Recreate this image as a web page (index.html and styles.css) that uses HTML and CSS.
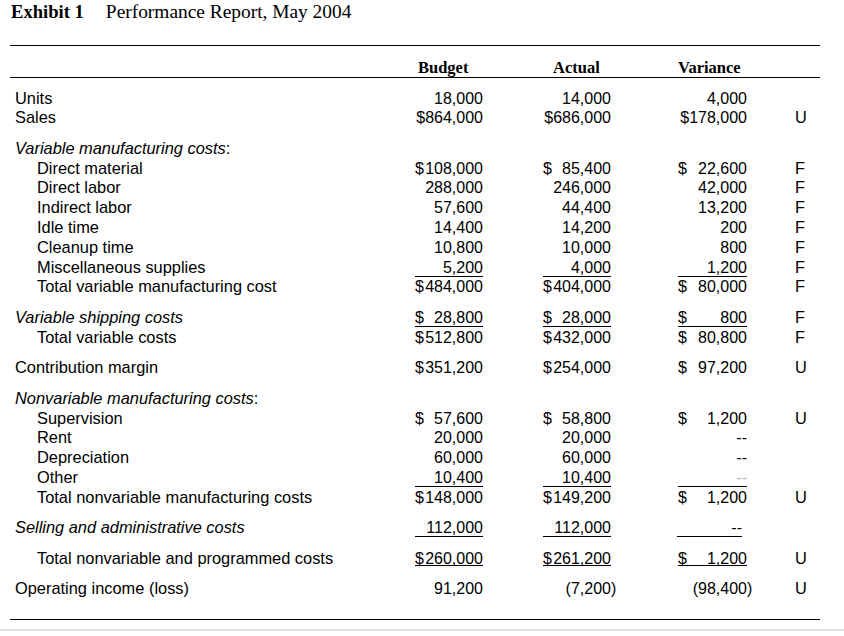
FILE: index.html
```html
<!DOCTYPE html>
<html>
<head>
<meta charset="utf-8">
<link rel="stylesheet" href="styles.css">
</head>
<body>
<h1 class="title"><b class="ex">Exhibit 1</b><span>Performance Report, May 2004</span></h1>
<div class="report">
  <div class="row head">
    <div></div>
    <div class="h hb">Budget</div>
    <div class="h ha">Actual</div>
    <div class="h hv">Variance</div>
    <div></div>
  </div>
  <div class="rows">
    <div class="row"><div class="l">Units</div><div class="n b"><span>18,000</span></div><div class="n a"><span>14,000</span></div><div class="n v"><span>4,000</span></div><div class="fu"></div></div>
    <div class="row"><div class="l">Sales</div><div class="n b"><span>$864,000</span></div><div class="n a"><span>$686,000</span></div><div class="n v"><span>$178,000</span></div><div class="fu">U</div></div>

    <div class="row gap"><div class="l"><i>Variable manufacturing costs</i>:</div></div>
    <div class="row"><div class="l s">Direct material</div><div class="n b"><span>$</span><span>108,000</span></div><div class="n a"><span>$</span><span>85,400</span></div><div class="n v"><span>$</span><span>22,600</span></div><div class="fu">F</div></div>
    <div class="row"><div class="l s">Direct labor</div><div class="n b"><span>288,000</span></div><div class="n a"><span>246,000</span></div><div class="n v"><span>42,000</span></div><div class="fu">F</div></div>
    <div class="row"><div class="l s">Indirect labor</div><div class="n b"><span>57,600</span></div><div class="n a"><span>44,400</span></div><div class="n v"><span>13,200</span></div><div class="fu">F</div></div>
    <div class="row"><div class="l s">Idle time</div><div class="n b"><span>14,400</span></div><div class="n a"><span>14,200</span></div><div class="n v"><span>200</span></div><div class="fu">F</div></div>
    <div class="row"><div class="l s">Cleanup time</div><div class="n b"><span>10,800</span></div><div class="n a"><span>10,000</span></div><div class="n v"><span>800</span></div><div class="fu">F</div></div>
    <div class="row"><div class="l s">Miscellaneous supplies</div><div class="n b u3"><span>5,200</span></div><div class="n a u3"><span>4,000</span></div><div class="n v u3"><span>1,200</span></div><div class="fu">F</div></div>
    <div class="row"><div class="l s">Total variable manufacturing cost</div><div class="n b"><span>$</span><span>484,000</span></div><div class="n a"><span>$</span><span>404,000</span></div><div class="n v"><span>$</span><span>80,000</span></div><div class="fu">F</div></div>

    <div class="row gap"><div class="l"><i>Variable shipping costs</i></div><div class="n b u3"><span>$</span><span>28,800</span></div><div class="n a u3"><span>$</span><span>28,000</span></div><div class="n v u3"><span>$</span><span>800</span></div><div class="fu">F</div></div>
    <div class="row"><div class="l s">Total variable costs</div><div class="n b"><span>$</span><span>512,800</span></div><div class="n a"><span>$</span><span>432,000</span></div><div class="n v"><span>$</span><span>80,800</span></div><div class="fu">F</div></div>

    <div class="row gap"><div class="l">Contribution margin</div><div class="n b"><span>$</span><span>351,200</span></div><div class="n a"><span>$</span><span>254,000</span></div><div class="n v"><span>$</span><span>97,200</span></div><div class="fu">U</div></div>

    <div class="row gap"><div class="l"><i>Nonvariable manufacturing costs</i>:</div></div>
    <div class="row"><div class="l s">Supervision</div><div class="n b"><span>$</span><span>57,600</span></div><div class="n a"><span>$</span><span>58,800</span></div><div class="n v"><span>$</span><span>1,200</span></div><div class="fu">U</div></div>
    <div class="row"><div class="l s">Rent</div><div class="n b"><span>20,000</span></div><div class="n a"><span>20,000</span></div><div class="n v"><span>--</span></div><div class="fu"></div></div>
    <div class="row"><div class="l s">Depreciation</div><div class="n b"><span>60,000</span></div><div class="n a"><span>60,000</span></div><div class="n v"><span>--</span></div><div class="fu"></div></div>
    <div class="row"><div class="l s">Other</div><div class="n b u3"><span>10,400</span></div><div class="n a u3"><span>10,400</span></div><div class="n v u3"><span class="dim">--</span></div><div class="fu"></div></div>
    <div class="row"><div class="l s">Total nonvariable manufacturing costs</div><div class="n b"><span>$</span><span>148,000</span></div><div class="n a"><span>$</span><span>149,200</span></div><div class="n v"><span>$</span><span>1,200</span></div><div class="fu">U</div></div>

    <div class="row gap"><div class="l"><i>Selling and administrative costs</i></div><div class="n b u2"><span>112,000</span></div><div class="n a u2"><span>112,000</span></div><div class="n v u2 short"><span>--</span></div><div class="fu"></div></div>

    <div class="row gap"><div class="l s">Total nonvariable and programmed costs</div><div class="n b u1"><span>$</span><span>260,000</span></div><div class="n a u1"><span>$</span><span>261,200</span></div><div class="n v u1"><span>$</span><span>1,200</span></div><div class="fu">U</div></div>

    <div class="row gap"><div class="l">Operating income (loss)</div><div class="n b"><span>91,200</span></div><div class="n a"><span>(7,200<span class="rp">)</span></span></div><div class="n v"><span>(98,400<span class="rp">)</span></span></div><div class="fu">U</div></div>
  </div>
</div>
<div class="gray"></div>
</body>
</html>
```
FILE: styles.css
```css
html, body {
  margin: 0;
  background: #fff;
  color: #000;
}
body {
  font-family: "Liberation Sans", Arial, sans-serif;
  width: 844px;
}
.title {
  margin: 0;
  height: 45px;
  box-sizing: border-box;
  padding: 1px 0 0 11px;
  display: flex;
  gap: 22px;
  font-family: "Liberation Serif", "Times New Roman", serif;
  font-weight: normal;
  font-size: 19.4px;
  line-height: 22px;
}
.title .ex {
  font-weight: bold;
  font-size: 18.6px;
}
.report {
  margin-left: 10px;
  width: 810px;
  border-top: 1px solid #000;
  border-bottom: 1px solid #000;
  padding-bottom: 19.6px;
}
.row {
  display: grid;
  grid-template-columns: 405px 68px 128px 136px 1fr;
  align-items: baseline;
  height: 19.8px;
  line-height: 19.8px;
  font-size: 16.4px;
  white-space: nowrap;
}
.head {
  height: 19.5px;
  line-height: 19.5px;
  padding-top: 11.5px;
  border-bottom: 1px solid #000;
  font-family: "Liberation Serif", "Times New Roman", serif;
  font-weight: bold;
  font-size: 16.5px;
}
.h { width: 68px; justify-self: end; }
.hb { padding-left: 3px; box-sizing: border-box; }
.ha { padding-left: 10px; box-sizing: border-box; }
.hv { width: 69px; }
.rows {
  padding-top: 10.5px;
}
.gap {
  margin-top: 10.74px;
}
.l {
  padding-left: 5px;
}
.l.s {
  padding-left: 27px;
}
.n {
  display: flex;
  justify-content: space-between;
  width: 68px;
  justify-self: end;
  font-size: 16px;
}
.n > :last-child {
  margin-left: auto;
}
.n.v {
  width: 69px;
}
.n.short {
  width: 65px;
  margin-right: 5px;
}
.u3 { line-height: 17.2px; border-bottom: 1px solid #000; }
.u2 { line-height: 15.2px; border-bottom: 1px solid #000; }
.u1 { line-height: 13.2px; border-bottom: 1px solid #000; }
.rp {
  margin-right: -5.3px;
}
.dim {
  color: #b5b5b5;
}
.fu {
  padding-left: 48px;
}
.gray {
  margin-top: 9px;
  height: 2px;
  background: #dedede;
}
```
